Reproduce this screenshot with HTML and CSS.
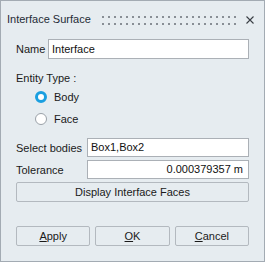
FILE: index.html
```html
<!DOCTYPE html>
<html lang="en">
<head>
    <meta charset="UTF-8">
    <title>Interface Surface</title>
    <link rel="stylesheet" href="styles.css">
</head>
<body>
    <div class="dialog">
        <div class="titlebar">
            <span class="title">Interface Surface</span>
            <span class="grip"></span>
            <svg class="close" width="8" height="8" viewBox="0 0 8 8">
                <path d="M0.5 0.5 L7.5 7.5 M7.5 0.5 L0.5 7.5" stroke="#3a3f45" stroke-width="1.1" fill="none"/>
            </svg>
        </div>

        <div class="content">
            <div class="field-row name-row">
                <label class="label name-label">Name</label>
                <div class="input">Interface</div>
            </div>

            <div class="section-label">Entity Type :</div>
            <div class="radio-row">
                <span class="radio checked"></span>
                <span>Body</span>
            </div>
            <div class="radio-row">
                <span class="radio"></span>
                <span>Face</span>
            </div>

            <div class="field-row bodies-row">
                <label class="label wide-label">Select bodies</label>
                <div class="input">Box1,Box2</div>
            </div>
            <div class="field-row tol-row">
                <label class="label wide-label">Tolerance</label>
                <div class="input number">0.000379357 m</div>
            </div>
            <button class="btn display-btn">Display Interface Faces</button>

            <div class="actions">
                <button class="btn"><u>A</u>pply</button>
                <button class="btn"><u>O</u>K</button>
                <button class="btn"><u>C</u>ancel</button>
            </div>
        </div>
    </div>
</body>
</html>
```

FILE: styles.css
```css
body {
    margin: 0;
    font-family: 'Liberation Sans', Arial, sans-serif;
    font-size: 11px;
    color: #1a1a1a;
}

.dialog {
    width: 265px;
    height: 262px;
    box-sizing: border-box;
    border: 1px solid #a3abb3;
    background: #e6ecf0;
}

.titlebar {
    display: flex;
    align-items: center;
    height: 36px;
    padding: 0 10px 0 6px;
    white-space: nowrap;
}

.title {
    font-size: 11px;
    color: #1f2b36;
}

.grip {
    margin-left: auto;
    margin-right: 10px;
    width: 134px;
    height: 9px;
    margin-top: 2px;
    background-color: #888e95;
    background-image:
        linear-gradient(90deg, transparent 2px, #e6ecf0 2px),
        linear-gradient(transparent 2px, #e6ecf0 2px, #e6ecf0 7px, transparent 7px);
    background-size: 6px 100%, 100% 9px;
}

.close {
    display: block;
    margin-top: 1px;
}

.content {
    padding: 2px 15px 0 15px;
}

.field-row {
    display: flex;
    align-items: center;
}

.label {
    flex: none;
    white-space: nowrap;
}

.name-label {
    width: 32px;
}

.wide-label {
    width: 71px;
}

.input {
    flex: 1;
    height: 20px;
    box-sizing: border-box;
    border: 1px solid #abb0b6;
    background: #fff;
    padding: 0 3px;
    line-height: 18px;
    color: #111;
}

.input.number {
    text-align: right;
    padding-right: 5px;
}

.section-label {
    margin-top: 11px;
    line-height: 16px;
}

.radio-row {
    display: flex;
    align-items: center;
    height: 22px;
    padding-left: 19px;
}

.radio {
    width: 12px;
    height: 12px;
    box-sizing: border-box;
    border-radius: 50%;
    border: 1px solid #9aa1a8;
    background: #fff;
    margin-right: 7px;
}

.radio.checked {
    border: 3.5px solid #1a9fe0;
}

.bodies-row {
    margin-top: 8px;
}

.bodies-row .input,
.tol-row .input {
    height: 19px;
    line-height: 17px;
}

.tol-row {
    margin-top: 3px;
}

.btn {
    display: block;
    height: 20px;
    box-sizing: border-box;
    border: 1px solid #b3b9bf;
    border-radius: 2px;
    background: #e6ecf0;
    font-family: inherit;
    font-size: 11px;
    color: #1a1a1a;
    padding: 0;
}

.display-btn {
    width: 100%;
    margin-top: 3px;
}

.actions {
    display: grid;
    grid-template-columns: repeat(3, 1fr);
    gap: 5px;
    margin-top: 24px;
}
```
